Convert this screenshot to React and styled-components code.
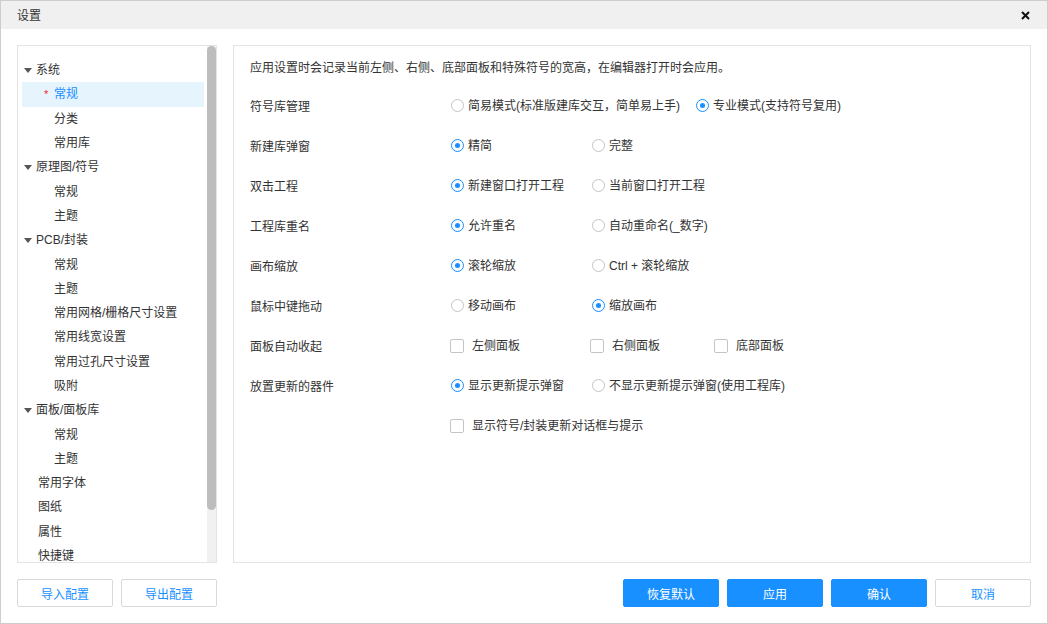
import React from "react";
import styled, { createGlobalStyle } from "styled-components";

const GlobalStyle = createGlobalStyle`
  html, body { margin: 0; padding: 0; background: #fff; }
  body {
    font-family: "Liberation Sans", "Noto Sans CJK SC", sans-serif;
    font-size: 12px;
    color: #333;
  }
  * { box-sizing: border-box; }
`;

const Dialog = styled.div`
  width: 1048px;
  height: 624px;
  border: 1px solid #cdcdcd;
  display: flex;
  flex-direction: column;
  background: #fff;
`;

const TitleBar = styled.div`
  height: 28px;
  flex: none;
  background: #f0f0f0;
  display: flex;
  align-items: center;
  justify-content: space-between;
  padding: 0 17px 0 16px;
  line-height: 16px;
`;

const Title = styled.span`
  padding-top: 2px;
`;

const Close = styled.span`
  display: flex;
  width: 9px;
  height: 9px;
  cursor: pointer;
`;

const Body = styled.div`
  flex: 1;
  display: flex;
  flex-direction: column;
  gap: 16px;
  padding: 16px;
  min-height: 0;
`;

const Main = styled.div`
  flex: 1;
  display: flex;
  gap: 16px;
  min-height: 0;
`;

const TreePanel = styled.div`
  width: 200px;
  flex: none;
  border: 1px solid #e4e4e4;
  display: flex;
  overflow: hidden;
`;

const Tree = styled.ul`
  flex: 1;
  list-style: none;
  margin: 0;
  padding: 12px 3px 0 4px;
  overflow: hidden;
`;

const ScrollTrack = styled.div`
  width: 9px;
  flex: none;
  background: #f1f1f1;
`;

const ScrollThumb = styled.div`
  height: 464px;
  background: #bdbdbd;
  border-radius: 5px;
`;

const Node = styled.li`
  height: 24.3px;
  line-height: 24px;
  display: flex;
  align-items: center;
  white-space: nowrap;
  padding-left: ${(p) => (p.$level === 2 ? 22 : p.$leaf ? 16 : 2)}px;
  background: ${(p) => (p.$active ? "#e6f4fe" : "transparent")};
  color: ${(p) => (p.$active ? "#1890ff" : "#333")};
`;

const Caret = styled.span`
  width: 12px;
  flex: none;
  display: flex;
  align-items: center;
  &::before {
    content: "";
    border-left: 4px solid transparent;
    border-right: 4px solid transparent;
    border-top: 5px solid #555;
  }
`;

const Mark = styled.span`
  width: 10px;
  flex: none;
  color: #f5222d;
  font-size: 11px;
  line-height: 12px;
`;

const Content = styled.div`
  flex: 1;
  border: 1px solid #e4e4e4;
  padding: 12px 16px;
`;

const Note = styled.div`
  line-height: 20px;
  margin-bottom: 7px;
`;

const Row = styled.div`
  height: 40px;
  display: flex;
  align-items: center;
`;

const Label = styled.div`
  width: 201px;
  flex: none;
`;

const Option = styled.label`
  display: inline-flex;
  align-items: center;
  min-width: 125px;
  margin-right: ${(p) => (p.$gap === undefined ? 16 : p.$gap)}px;
  gap: ${(p) => (p.$box ? 8 : 4)}px;
  margin-left: ${(p) => (p.$box ? -1 : 0)}px;
  white-space: nowrap;
  line-height: 16px;
  padding-top: 1px;
  cursor: pointer;
`;

const Radio = styled.span`
  width: 13px;
  height: 13px;
  flex: none;
  border-radius: 50%;
  border: 1px solid ${(p) => (p.$on ? "#1890ff" : "#c4c4c4")};
  display: flex;
  align-items: center;
  justify-content: center;
  &::after {
    content: "";
    width: 5px;
    height: 5px;
    border-radius: 50%;
    background: ${(p) => (p.$on ? "#1890ff" : "transparent")};
  }
`;

const Box = styled.span`
  width: 14px;
  height: 14px;
  flex: none;
  border: 1px solid #c4c4c4;
  border-radius: 2px;
  background: #fff;
`;

const Footer = styled.div`
  height: 28px;
  flex: none;
  display: flex;
  justify-content: space-between;
`;

const Group = styled.div`
  display: flex;
  gap: 8px;
`;

const Button = styled.button`
  width: 96px;
  height: 28px;
  border-radius: 2px;
  font: inherit;
  font-size: 12px;
  cursor: pointer;
  border: 1px solid ${(p) => (p.$primary ? "#1890ff" : "#d9d9d9")};
  background: ${(p) => (p.$primary ? "#1890ff" : "#fff")};
  color: ${(p) => (p.$primary ? "#fff" : "#1890ff")};
`;

const tree = [
  { t: "系统", level: 1 },
  { t: "常规", level: 2, active: true, mark: true },
  { t: "分类", level: 2 },
  { t: "常用库", level: 2 },
  { t: "原理图/符号", level: 1 },
  { t: "常规", level: 2 },
  { t: "主题", level: 2 },
  { t: "PCB/封装", level: 1 },
  { t: "常规", level: 2 },
  { t: "主题", level: 2 },
  { t: "常用网格/栅格尺寸设置", level: 2 },
  { t: "常用线宽设置", level: 2 },
  { t: "常用过孔尺寸设置", level: 2 },
  { t: "吸附", level: 2 },
  { t: "面板/面板库", level: 1 },
  { t: "常规", level: 2 },
  { t: "主题", level: 2 },
  { t: "常用字体", level: 1, leaf: true },
  { t: "图纸", level: 1, leaf: true },
  { t: "属性", level: 1, leaf: true },
  { t: "快捷键", level: 1, leaf: true },
];

const rows = [
  { label: "符号库管理", opts: [["简易模式(标准版建库交互，简单易上手)", false], ["专业模式(支持符号复用)", true]] },
  { label: "新建库弹窗", opts: [["精简", true], ["完整", false]] },
  { label: "双击工程", opts: [["新建窗口打开工程", true], ["当前窗口打开工程", false]] },
  { label: "工程库重名", opts: [["允许重名", true], ["自动重命名(_数字)", false]] },
  { label: "画布缩放", opts: [["滚轮缩放", true], ["Ctrl + 滚轮缩放", false]] },
  { label: "鼠标中键拖动", opts: [["移动画布", false], ["缩放画布", true]] },
];

const CloseIcon = () => (
  <svg width="9" height="9" viewBox="0 0 9 9">
    <path d="M1 1L8 8M8 1L1 8" stroke="#111" strokeWidth="2" />
  </svg>
);

export default function App() {
  return (
    <>
      <GlobalStyle />
      <Dialog>
        <TitleBar>
          <Title>设置</Title>
          <Close>
            <CloseIcon />
          </Close>
        </TitleBar>
        <Body>
          <Main>
            <TreePanel>
              <Tree>
                {tree.map((n, i) => (
                  <Node key={i} $level={n.level} $leaf={n.leaf} $active={n.active}>
                    {n.level === 1 && !n.leaf && <Caret />}
                    {n.level === 2 && <Mark>{n.mark ? "*" : ""}</Mark>}
                    {n.t}
                  </Node>
                ))}
              </Tree>
              <ScrollTrack>
                <ScrollThumb />
              </ScrollTrack>
            </TreePanel>
            <Content>
              <Note>应用设置时会记录当前左侧、右侧、底部面板和特殊符号的宽高，在编辑器打开时会应用。</Note>
              {rows.map((r) => (
                <Row key={r.label}>
                  <Label>{r.label}</Label>
                  {r.opts.map(([t, on]) => (
                    <Option key={t}>
                      <Radio $on={on} />
                      {t}
                    </Option>
                  ))}
                </Row>
              ))}
              <Row>
                <Label>面板自动收起</Label>
                <Option $box>
                  <Box />
                  左侧面板
                </Option>
                <Option $box $gap={0}>
                  <Box />
                  右侧面板
                </Option>
                <Option $box>
                  <Box />
                  底部面板
                </Option>
              </Row>
              <Row>
                <Label>放置更新的器件</Label>
                <Option>
                  <Radio $on />
                  显示更新提示弹窗
                </Option>
                <Option>
                  <Radio />
                  不显示更新提示弹窗(使用工程库)
                </Option>
              </Row>
              <Row>
                <Label />
                <Option $box>
                  <Box />
                  显示符号/封装更新对话框与提示
                </Option>
              </Row>
            </Content>
          </Main>
          <Footer>
            <Group>
              <Button>导入配置</Button>
              <Button>导出配置</Button>
            </Group>
            <Group>
              <Button $primary>恢复默认</Button>
              <Button $primary>应用</Button>
              <Button $primary>确认</Button>
              <Button>取消</Button>
            </Group>
          </Footer>
        </Body>
      </Dialog>
    </>
  );
}
